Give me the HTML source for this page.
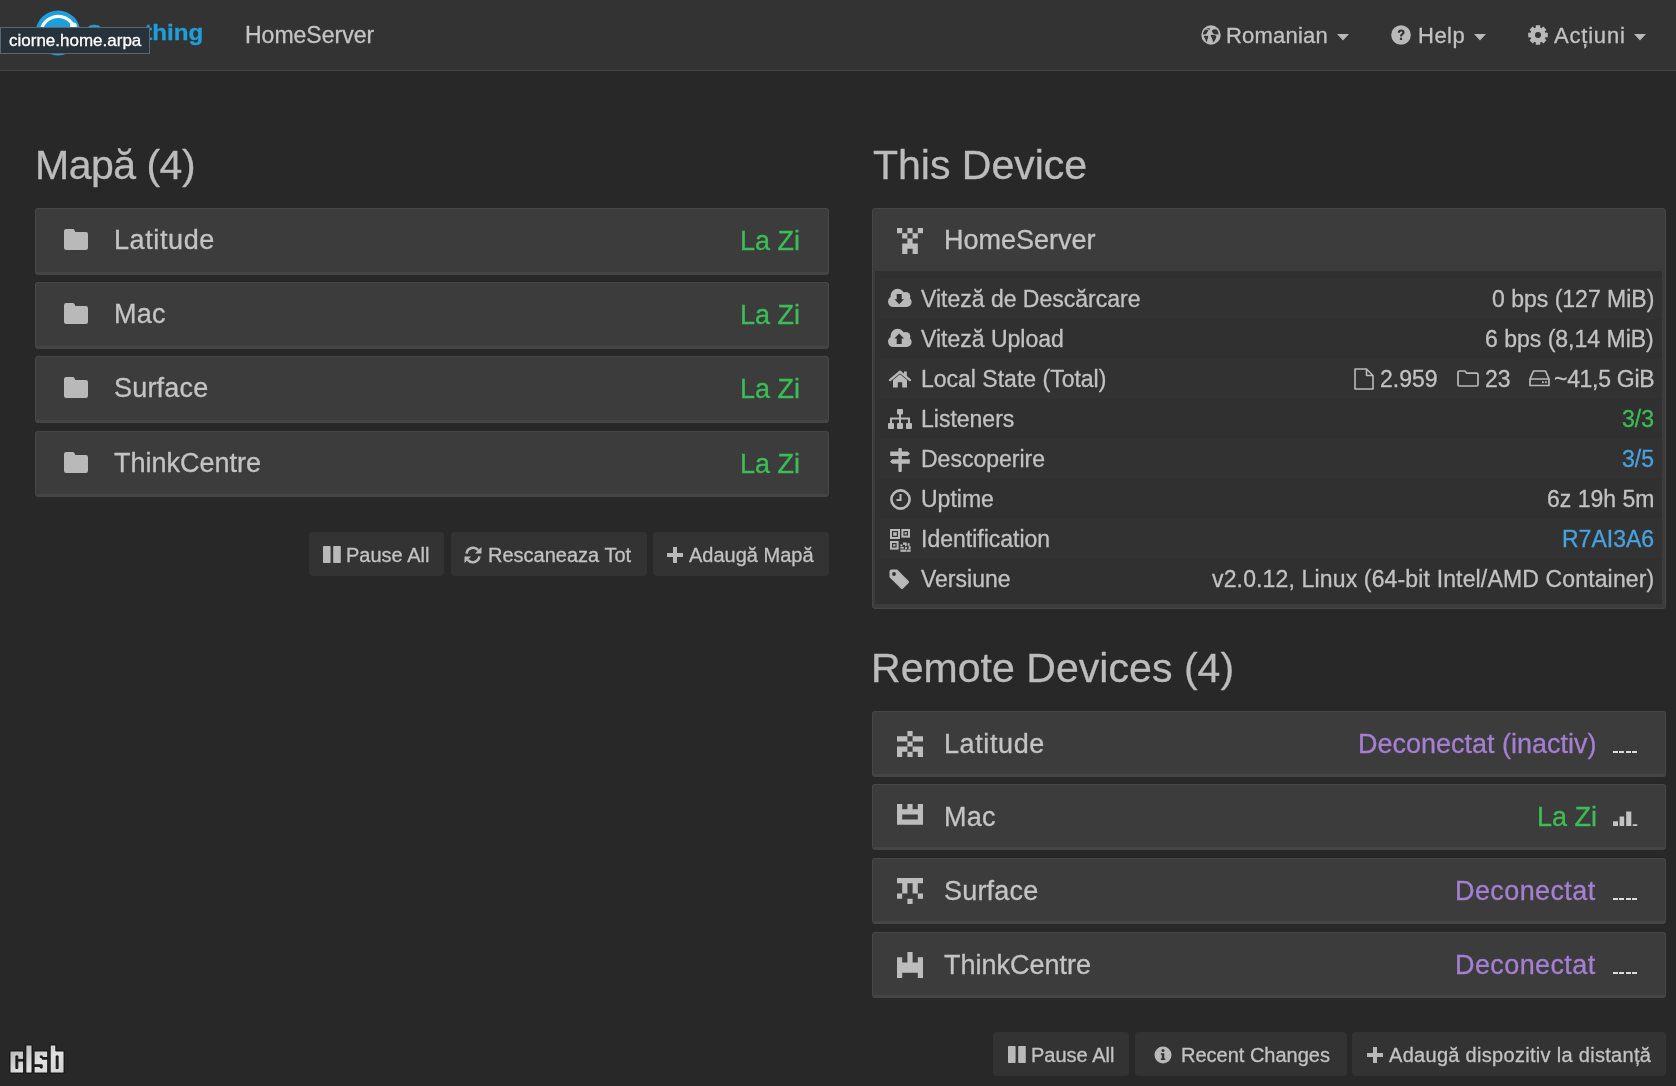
<!DOCTYPE html><html><head><meta charset="utf-8"><style>
html,body{margin:0;padding:0;}
body{width:1676px;height:1086px;background:#282828;position:relative;overflow:hidden;font-family:"Liberation Sans",sans-serif;color:#bdbdbd;}
.t{position:absolute;line-height:1;white-space:nowrap;will-change:transform;-webkit-text-stroke-width:0.3px;}
svg{position:absolute;display:block;overflow:visible;}
#nav{position:absolute;left:0;top:0;width:1676px;height:70px;background:#333333;border-bottom:1px solid #474747;}
.fp{position:absolute;left:35px;width:794px;background:#3c3c3c;border:1px solid #474747;border-bottom:3px solid #454545;border-radius:3px;box-sizing:border-box;}
.dp{position:absolute;left:872px;width:794px;background:#3c3c3c;border:1px solid #474747;border-bottom:3px solid #454545;border-radius:3px;box-sizing:border-box;}
.btn{position:absolute;height:44px;background:#333333;border-radius:4px;}
.h{font-size:41px;color:#bcbcbc}
.pt{font-size:27px;color:#c4c4c4}
.tr{font-size:23px;color:#c2c2c2}
.bt{font-size:20px;color:#c2c2c2}
.g{color:#3cbd57}
.p{color:#a57fd2}
.b{color:#48a2df}
.stripe{position:absolute;left:876px;width:786px;height:40px;}
</style></head><body>
<div id="nav"></div>
<svg style="left:35px;top:10px" width="46" height="46" viewBox="0 0 46 46"><circle cx="23" cy="23" r="22.5" fill="#1f9fd9"/><path d="M5.8 24.5A17.3 17.3 0 0 1 37.8 14.6" fill="none" stroke="#fff" stroke-width="3.2"/><circle cx="38.4" cy="16" r="3.4" fill="#fff"/></svg>
<div class="t" style="left:97px;top:22.1px;font-size:22px;font-weight:bold;letter-spacing:0px;color:#1f9fd9;transform:scaleX(1.1);transform-origin:100% 50%">Syncthing</div>
<div class="t" style="left:245px;top:23.7px;font-size:23px;color:#c4c4c4">HomeServer</div>
<div style="position:absolute;left:0;top:27px;width:148px;height:25px;background:#27323b;border:1px solid #5a6670;"></div>
<div class="t" style="left:8.5px;top:32.2px;font-size:17px;color:#ffffff;-webkit-text-stroke:0.3px #fff">ciorne.home.arpa</div>
<svg style="left:1200.5px;top:24.7px" width="20" height="20" viewBox="0 0 20 20"><circle cx="10" cy="10" r="9.7" fill="#b9b9b9"/><path d="M2 9.2Q1.8 7 3.4 5.4Q5 4.2 6.4 4.8L7.4 5.6Q6.2 7 5.6 8.6Q4.2 9.9 2 9.2Z" fill="#333333"/><path d="M5.4 3.6Q7.4 2.8 9.4 3.4L8.6 4.8Q6.8 4.6 5.4 3.6Z" fill="#333333"/><path d="M10.8 5.6Q13 3.8 15.6 4.6Q17.6 6.2 17.4 9.8Q16 8.8 14.8 9.6Q12.8 9.4 12 8.2Q11 7.2 10.8 5.6Z" fill="#333333"/><path d="M2.8 11Q5 10.3 7.1 11Q7.5 12.9 6.5 14.3Q6 16.4 5.3 17.2Q4.6 15.5 4.2 13.8Q3 12.6 2.8 11Z" fill="#333333"/><path d="M9.8 10Q12.4 9.5 15.3 10.8Q15.5 13.1 14.1 15Q13.1 16.7 12 17.2Q11.6 15.1 11.2 13.5Q9.8 12.2 9.8 10Z" fill="#333333"/></svg>
<div class="t" style="left:1226px;top:25.2px;font-size:22px;letter-spacing:0.2px;color:#c2c2c2">Romanian</div>
<svg style="left:1337px;top:33.5px" width="12" height="7" viewBox="0 0 12 7"><path d="M0 0H12L6 6.5Z" fill="#b9b9b9"/></svg>
<svg style="left:1391.3px;top:24.7px" width="20" height="20" viewBox="0 0 20 20"><circle cx="10" cy="10" r="9.8" fill="#b9b9b9"/><path d="M6.6 7.4Q7 4.4 10.2 4.4Q13.6 4.6 13.6 7.4Q13.6 9 11.8 10Q11 10.5 11 11.6H9Q8.9 9.6 10.4 8.6Q11.4 8 11.4 7.4Q11.3 6.4 10.1 6.4Q8.9 6.4 8.6 8.1Z" fill="#333333"/><rect x="8.9" y="12.7" width="2.2" height="2.3" fill="#333333"/></svg>
<div class="t" style="left:1417.5px;top:25.2px;font-size:22px;letter-spacing:0.5px;color:#c2c2c2">Help</div>
<svg style="left:1474px;top:33.5px" width="12" height="7" viewBox="0 0 12 7"><path d="M0 0H12L6 6.5Z" fill="#b9b9b9"/></svg>
<svg style="left:1528px;top:24.8px" width="20" height="20" viewBox="0 0 20 20"><path d="M16.79 7.60L19.76 7.82L19.76 12.18L16.79 12.40L16.50 13.10L18.44 15.36L15.36 18.44L13.10 16.50L12.40 16.79L12.18 19.76L7.82 19.76L7.60 16.79L6.90 16.50L4.64 18.44L1.56 15.36L3.50 13.10L3.21 12.40L0.24 12.18L0.24 7.82L3.21 7.60L3.50 6.90L1.56 4.64L4.64 1.56L6.90 3.50L7.60 3.21L7.82 0.24L12.18 0.24L12.40 3.21L13.10 3.50L15.36 1.56L18.44 4.64L16.50 6.90Z" fill="#b9b9b9"/><circle cx="10" cy="10" r="7.4" fill="#b9b9b9"/><circle cx="10" cy="10" r="3" fill="#333333"/></svg>
<div class="t" style="left:1554px;top:25.2px;font-size:22px;letter-spacing:0.8px;color:#c2c2c2">Acțiuni</div>
<svg style="left:1634px;top:33.5px" width="12" height="7" viewBox="0 0 12 7"><path d="M0 0H12L6 6.5Z" fill="#b9b9b9"/></svg>
<div class="t h" style="left:34.5px;top:145px;letter-spacing:-0.5px">Mapă (4)</div>
<div class="t h" style="left:872.5px;top:145px;letter-spacing:0px">This Device</div>
<div class="t h" style="left:871px;top:648.3px;letter-spacing:0.05px">Remote Devices (4)</div>
<div class="fp" style="top:208px;height:67px"></div>
<svg style="left:64px;top:229px" width="24" height="21" viewBox="0 0 24 21"><path d="M2.2 0H8.6Q10 0 10.6 1.3L11.3 3H21.8Q24 3 24 5.2V18.8Q24 21 21.8 21H2.2Q0 21 0 18.8V2.2Q0 0 2.2 0Z" fill="#b9b9b9"/></svg>
<div class="t pt" style="left:114px;top:227px;letter-spacing:0.6px">Latitude</div>
<div class="t pt g" style="left:740px;top:227.5px">La Zi</div>
<div class="fp" style="top:282px;height:67px"></div>
<svg style="left:64px;top:303px" width="24" height="21" viewBox="0 0 24 21"><path d="M2.2 0H8.6Q10 0 10.6 1.3L11.3 3H21.8Q24 3 24 5.2V18.8Q24 21 21.8 21H2.2Q0 21 0 18.8V2.2Q0 0 2.2 0Z" fill="#b9b9b9"/></svg>
<div class="t pt" style="left:114px;top:301px;letter-spacing:0.25px">Mac</div>
<div class="t pt g" style="left:740px;top:301.5px">La Zi</div>
<div class="fp" style="top:356px;height:67px"></div>
<svg style="left:64px;top:377px" width="24" height="21" viewBox="0 0 24 21"><path d="M2.2 0H8.6Q10 0 10.6 1.3L11.3 3H21.8Q24 3 24 5.2V18.8Q24 21 21.8 21H2.2Q0 21 0 18.8V2.2Q0 0 2.2 0Z" fill="#b9b9b9"/></svg>
<div class="t pt" style="left:114px;top:375px;letter-spacing:0.2px">Surface</div>
<div class="t pt g" style="left:740px;top:375.5px">La Zi</div>
<div class="fp" style="top:431px;height:66px"></div>
<svg style="left:64px;top:452px" width="24" height="21" viewBox="0 0 24 21"><path d="M2.2 0H8.6Q10 0 10.6 1.3L11.3 3H21.8Q24 3 24 5.2V18.8Q24 21 21.8 21H2.2Q0 21 0 18.8V2.2Q0 0 2.2 0Z" fill="#b9b9b9"/></svg>
<div class="t pt" style="left:114px;top:450px;letter-spacing:0px">ThinkCentre</div>
<div class="t pt g" style="left:740px;top:450.5px">La Zi</div>
<div class="btn" style="left:309px;top:532px;width:135px"></div>
<div class="btn" style="left:451px;top:532px;width:196px"></div>
<div class="btn" style="left:653px;top:532px;width:176px"></div>
<svg style="left:323px;top:546px" width="18" height="17" viewBox="0 0 18 17"><rect x="0" y="0" width="7.6" height="17" rx="0.8" fill="#b9b9b9"/><rect x="10.2" y="0" width="7.6" height="17" rx="0.8" fill="#b9b9b9"/></svg>
<div class="t bt" style="left:346px;top:545px">Pause All</div>
<svg style="left:464px;top:546px" width="18" height="18" viewBox="0 0 18 18"><path d="M2.6 7.6A6.6 6.6 0 0 1 14.2 4.2" fill="none" stroke="#b9b9b9" stroke-width="2.6"/><path d="M17.5 1V7.6H10.9Z" fill="#b9b9b9"/><path d="M15.4 10.4A6.6 6.6 0 0 1 3.8 13.8" fill="none" stroke="#b9b9b9" stroke-width="2.6"/><path d="M0.5 17V10.4H7.1Z" fill="#b9b9b9"/></svg>
<div class="t bt" style="left:488px;top:545px">Rescaneaza Tot</div>
<svg style="left:667px;top:547px" width="16" height="16" viewBox="0 0 16 16"><path d="M6 0H10V6H16V10H10V16H6V10H0V6H6Z" fill="#b9b9b9"/></svg>
<div class="t bt" style="left:689px;top:545px">Adaugă Mapă</div>
<div style="position:absolute;left:872px;top:208px;width:794px;height:401px;background:#3c3c3c;border:1px solid #464646;box-sizing:border-box;border-radius:3px"></div>
<div style="position:absolute;left:875px;top:271px;width:787px;height:333px;background:#303030"></div>
<div class="stripe" style="top:279px;background:#323232"></div>
<div class="stripe" style="top:359px;background:#323232"></div>
<div class="stripe" style="top:439px;background:#323232"></div>
<div class="stripe" style="top:519px;background:#323232"></div>
<svg style="left:897px;top:228px" width="26" height="26" viewBox="0 0 26 26"><path d="M0.0 0.0h5.2v5.2h-5.2zM10.4 0.0h5.2v5.2h-5.2zM20.8 0.0h5.2v5.2h-5.2zM5.2 5.2h5.2v5.2h-5.2zM15.6 5.2h5.2v5.2h-5.2zM10.4 10.4h5.2v5.2h-5.2zM5.2 15.6h5.2v5.2h-5.2zM10.4 15.6h5.2v5.2h-5.2zM15.6 15.6h5.2v5.2h-5.2zM5.2 20.8h5.2v5.2h-5.2zM15.6 20.8h5.2v5.2h-5.2z" fill="#bdbdbd"/></svg>
<div class="t pt" style="left:944px;top:227px">HomeServer</div>
<div class="t tr" style="left:920.5px;top:287.5px">Viteză de Descărcare</div>
<div class="t tr" style="left:920.5px;top:327.5px">Viteză Upload</div>
<div class="t tr" style="left:920.5px;top:367.5px">Local State (Total)</div>
<div class="t tr" style="left:920.5px;top:407.5px">Listeners</div>
<div class="t tr" style="left:920.5px;top:447.5px">Descoperire</div>
<div class="t tr" style="left:920.5px;top:487.5px">Uptime</div>
<div class="t tr" style="left:920.5px;top:527.5px">Identification</div>
<div class="t tr" style="left:920.5px;top:567.5px">Versiune</div>
<svg style="left:884px;top:283px" width="32" height="30" viewBox="0 0 32 30"><circle cx="9.4" cy="18.6" r="5.4" fill="#b9b9b9"/><circle cx="13.6" cy="12.9" r="7.1" fill="#b9b9b9"/><circle cx="21.6" cy="13.6" r="4.7" fill="#b9b9b9"/><circle cx="22.6" cy="19" r="5" fill="#b9b9b9"/><rect x="9.4" y="13" width="13.2" height="11" fill="#b9b9b9"/><path d="M12.7 11H17.7V16.3H20L15.2 21.2L10.4 16.3H12.7Z" fill="#303030"/></svg>
<svg style="left:884px;top:323px" width="32" height="30" viewBox="0 0 32 30"><circle cx="9.4" cy="18.6" r="5.4" fill="#b9b9b9"/><circle cx="13.6" cy="12.9" r="7.1" fill="#b9b9b9"/><circle cx="21.6" cy="13.6" r="4.7" fill="#b9b9b9"/><circle cx="22.6" cy="19" r="5" fill="#b9b9b9"/><rect x="9.4" y="13" width="13.2" height="11" fill="#b9b9b9"/><path d="M15.2 10.6L20 15.6H17.7V21H12.7V15.6H10.4Z" fill="#303030"/></svg>
<svg style="left:889px;top:369.5px" width="22" height="18" viewBox="0 0 22 18"><path d="M4 17.5V10L11 4.2L18 10V17.5H13.2V12.3H8.8V17.5Z" fill="#b9b9b9"/><path d="M1 10.2L11 1.8L21 10.2" fill="none" stroke="#b9b9b9" stroke-width="2.2" stroke-linecap="round"/><rect x="15" y="1.5" width="2.8" height="5" fill="#b9b9b9"/></svg>
<svg style="left:888px;top:409px" width="24" height="20" viewBox="0 0 24 20"><rect x="9" y="0" width="6" height="5.5" rx="1" fill="#b9b9b9"/><rect x="0" y="14" width="6" height="6" rx="1" fill="#b9b9b9"/><rect x="9" y="14" width="6" height="6" rx="1" fill="#b9b9b9"/><rect x="18" y="14" width="6" height="6" rx="1" fill="#b9b9b9"/><path d="M12 5V14M3 14V9.5H21V14" fill="none" stroke="#b9b9b9" stroke-width="2"/></svg>
<svg style="left:889px;top:447.5px" width="22" height="24" viewBox="0 0 22 24"><rect x="9.4" y="0" width="3.4" height="24" rx="1" fill="#b9b9b9"/><path d="M1.2 3.4H18.6L21 5.7L18.6 8H1.2Z" fill="#b9b9b9"/><path d="M3.4 11.2H20.8V15.8H3.4L1 13.5Z" fill="#b9b9b9"/></svg>
<svg style="left:889.5px;top:488.5px" width="21" height="21" viewBox="0 0 21 21"><circle cx="10.5" cy="10.5" r="9.1" fill="none" stroke="#b9b9b9" stroke-width="2.6"/><path d="M10.5 5V11H6.5" fill="none" stroke="#b9b9b9" stroke-width="2"/></svg>
<svg style="left:890px;top:528.8px" width="21" height="21" viewBox="0 0 21 21"><rect x="1" y="1" width="8" height="8" fill="none" stroke="#b9b9b9" stroke-width="2"/><rect x="3.2" y="3.2" width="3.6" height="3.6" fill="#b9b9b9"/><rect x="12.4" y="1" width="6.6" height="6.6" fill="none" stroke="#b9b9b9" stroke-width="2"/><rect x="14.6" y="3.1999999999999997" width="2.2" height="2.2" fill="#b9b9b9"/><rect x="1" y="13" width="6.6" height="6.6" fill="none" stroke="#b9b9b9" stroke-width="2"/><rect x="3.1999999999999997" y="15.2" width="2.2" height="2.2" fill="#b9b9b9"/><rect x="12.4" y="0" width="0" height="0" fill="#b9b9b9"/><rect x="13" y="13.5" width="3.5" height="2.3" fill="#b9b9b9"/><rect x="15" y="14.6" width="1.6" height="2.6" fill="#b9b9b9"/><rect x="10.4" y="15.4" width="2" height="2" fill="#b9b9b9"/><rect x="10.4" y="18" width="3.4" height="1.6" fill="#b9b9b9"/><rect x="10.4" y="20.6" width="6" height="2.2" fill="#b9b9b9"/><rect x="15" y="18.2" width="2" height="2" fill="#b9b9b9"/><rect x="17.6" y="14.2" width="2" height="2.6" fill="#b9b9b9"/><rect x="18.6" y="17.2" width="2" height="3" fill="#b9b9b9"/><rect x="17.2" y="20.6" width="3.4" height="2.2" fill="#b9b9b9"/><rect x="16.4" y="21.6" width="1" height="1" fill="#b9b9b9"/></svg>
<svg style="left:889px;top:568.5px" width="21" height="21" viewBox="0 0 21 21"><path d="M0.5 2.5Q0.5 0.5 2.5 0.5H8.2L19.6 11.9Q20.7 13 19.6 14.1L14.1 19.6Q13 20.7 11.9 19.6L0.5 8.2Z" fill="#b9b9b9"/><circle cx="5" cy="5" r="1.9" fill="#303030"/></svg>
<div class="t tr" style="right:22px;top:287.5px;text-align:right">0 bps (127 MiB)</div>
<div class="t tr" style="right:22px;top:327.5px;text-align:right">6 bps (8,14 MiB)</div>
<div class="t tr" style="right:22px;top:407.5px;text-align:right"><span class="g">3/3</span></div>
<div class="t tr" style="right:22px;top:447.5px;text-align:right"><span class="b">3/5</span></div>
<div class="t tr" style="right:22px;top:487.5px;text-align:right">6z 19h 5m</div>
<div class="t tr" style="right:22px;top:527.5px;text-align:right"><span class="b">R7AI3A6</span></div>
<div class="t tr" style="right:22px;top:567.5px;text-align:right"><span style="letter-spacing:0.15px">v2.0.12, Linux (64-bit Intel/AMD Container</span>)</div>
<svg style="left:1353.5px;top:368px" width="20" height="22" viewBox="0 0 20 22"><path d="M1 1H12.5L19 7.5V21H1Z M12.5 1V7.5H19" fill="none" stroke="#b9b9b9" stroke-width="1.6" stroke-linejoin="round"/></svg>
<div class="t tr" style="left:1380px;top:367.5px">2.959</div>
<svg style="left:1456.5px;top:370px" width="22" height="17" viewBox="0 0 22 17"><path d="M2.5 1H8L9.8 3.2H19.5Q21 3.2 21 4.7V14.5Q21 16 19.5 16H2.5Q1 16 1 14.5V2.5Q1 1 2.5 1Z" fill="none" stroke="#b9b9b9" stroke-width="1.7" stroke-linejoin="round"/></svg>
<div class="t tr" style="left:1485px;top:367.5px">23</div>
<svg style="left:1528.5px;top:370px" width="21" height="17" viewBox="0 0 21 17"><path d="M1 9L4.5 1H16.5L20 9V15.5H1Z M1 9H20" fill="none" stroke="#b9b9b9" stroke-width="1.7" stroke-linejoin="round"/><rect x="13" y="11.3" width="1.8" height="1.8" fill="#b9b9b9"/><rect x="16" y="11.3" width="1.8" height="1.8" fill="#b9b9b9"/></svg>
<div class="t tr" style="right:22px;top:367.5px;letter-spacing:-0.3px">~41,5 GiB</div>
<div class="dp" style="top:711px;height:66px"></div>
<svg style="left:897px;top:731px" width="26" height="26" viewBox="0 0 26 26"><path d="M10.4 0.0h5.2v5.2h-5.2zM0.0 5.2h5.2v5.2h-5.2zM5.2 5.2h5.2v5.2h-5.2zM15.6 5.2h5.2v5.2h-5.2zM20.8 5.2h5.2v5.2h-5.2zM10.4 10.4h5.2v5.2h-5.2zM0.0 15.6h5.2v5.2h-5.2zM5.2 15.6h5.2v5.2h-5.2zM15.6 15.6h5.2v5.2h-5.2zM20.8 15.6h5.2v5.2h-5.2zM0.0 20.8h5.2v5.2h-5.2zM10.4 20.8h5.2v5.2h-5.2zM20.8 20.8h5.2v5.2h-5.2z" fill="#bdbdbd"/></svg>
<div class="t pt" style="left:944px;top:730.5px;letter-spacing:0.6px">Latitude</div>
<div class="t pt p" style="right:79px;top:730.5px;text-align:right;letter-spacing:0px">Deconectat (inactiv)</div>
<div style="position:absolute;left:1612.8px;top:751px;width:5px;height:1.6px;background:#dcdcdc"></div><div style="position:absolute;left:1619.2px;top:751px;width:5px;height:1.6px;background:#dcdcdc"></div><div style="position:absolute;left:1625.6px;top:751px;width:5px;height:1.6px;background:#dcdcdc"></div><div style="position:absolute;left:1632.0px;top:751px;width:5px;height:1.6px;background:#dcdcdc"></div>
<div class="dp" style="top:784px;height:66px"></div>
<svg style="left:897px;top:804px" width="26" height="26" viewBox="0 0 26 26"><path d="M0.0 0.0h5.2v5.2h-5.2zM10.4 0.0h5.2v5.2h-5.2zM20.8 0.0h5.2v5.2h-5.2zM0.0 5.2h5.2v5.2h-5.2zM5.2 5.2h5.2v5.2h-5.2zM10.4 5.2h5.2v5.2h-5.2zM15.6 5.2h5.2v5.2h-5.2zM20.8 5.2h5.2v5.2h-5.2zM0.0 10.4h5.2v5.2h-5.2zM20.8 10.4h5.2v5.2h-5.2zM0.0 15.6h5.2v5.2h-5.2zM5.2 15.6h5.2v5.2h-5.2zM10.4 15.6h5.2v5.2h-5.2zM15.6 15.6h5.2v5.2h-5.2zM20.8 15.6h5.2v5.2h-5.2z" fill="#bdbdbd"/></svg>
<div class="t pt" style="left:944px;top:803.5px;letter-spacing:0.25px">Mac</div>
<div class="t pt g" style="right:79px;top:803.5px;text-align:right;letter-spacing:0px">La Zi</div>
<svg style="left:1612.5px;top:811px" width="26" height="15" viewBox="0 0 26 15"><rect x="0" y="10.3" width="5" height="4.7" fill="#c4c4c4"/><rect x="6.6" y="5.5" width="4.6" height="9.5" fill="#c4c4c4"/><rect x="13.2" y="0.5" width="5.1" height="14.5" fill="#c4c4c4"/><rect x="19.7" y="13.2" width="4.6" height="1.8" fill="#c4c4c4"/></svg>
<div class="dp" style="top:858px;height:66px"></div>
<svg style="left:897px;top:878px" width="26" height="26" viewBox="0 0 26 26"><path d="M0.0 0.0h5.2v5.2h-5.2zM5.2 0.0h5.2v5.2h-5.2zM10.4 0.0h5.2v5.2h-5.2zM15.6 0.0h5.2v5.2h-5.2zM20.8 0.0h5.2v5.2h-5.2zM5.2 5.2h5.2v5.2h-5.2zM15.6 5.2h5.2v5.2h-5.2zM5.2 10.4h5.2v5.2h-5.2zM15.6 10.4h5.2v5.2h-5.2zM0.0 15.6h5.2v5.2h-5.2zM20.8 15.6h5.2v5.2h-5.2zM10.4 20.8h5.2v5.2h-5.2z" fill="#bdbdbd"/></svg>
<div class="t pt" style="left:944px;top:877.5px;letter-spacing:0.2px">Surface</div>
<div class="t pt p" style="right:80px;top:877.5px;text-align:right;letter-spacing:0.4px">Deconectat</div>
<div style="position:absolute;left:1612.8px;top:898px;width:5px;height:1.6px;background:#dcdcdc"></div><div style="position:absolute;left:1619.2px;top:898px;width:5px;height:1.6px;background:#dcdcdc"></div><div style="position:absolute;left:1625.6px;top:898px;width:5px;height:1.6px;background:#dcdcdc"></div><div style="position:absolute;left:1632.0px;top:898px;width:5px;height:1.6px;background:#dcdcdc"></div>
<div class="dp" style="top:932px;height:66px"></div>
<svg style="left:897px;top:952px" width="26" height="26" viewBox="0 0 26 26"><path d="M10.4 0.0h5.2v5.2h-5.2zM0.0 5.2h5.2v5.2h-5.2zM10.4 5.2h5.2v5.2h-5.2zM20.8 5.2h5.2v5.2h-5.2zM0.0 10.4h5.2v5.2h-5.2zM5.2 10.4h5.2v5.2h-5.2zM10.4 10.4h5.2v5.2h-5.2zM15.6 10.4h5.2v5.2h-5.2zM20.8 10.4h5.2v5.2h-5.2zM0.0 15.6h5.2v5.2h-5.2zM5.2 15.6h5.2v5.2h-5.2zM10.4 15.6h5.2v5.2h-5.2zM15.6 15.6h5.2v5.2h-5.2zM20.8 15.6h5.2v5.2h-5.2zM0.0 20.8h5.2v5.2h-5.2zM20.8 20.8h5.2v5.2h-5.2z" fill="#bdbdbd"/></svg>
<div class="t pt" style="left:944px;top:951.5px;letter-spacing:0px">ThinkCentre</div>
<div class="t pt p" style="right:80px;top:951.5px;text-align:right;letter-spacing:0.4px">Deconectat</div>
<div style="position:absolute;left:1612.8px;top:972px;width:5px;height:1.6px;background:#dcdcdc"></div><div style="position:absolute;left:1619.2px;top:972px;width:5px;height:1.6px;background:#dcdcdc"></div><div style="position:absolute;left:1625.6px;top:972px;width:5px;height:1.6px;background:#dcdcdc"></div><div style="position:absolute;left:1632.0px;top:972px;width:5px;height:1.6px;background:#dcdcdc"></div>
<div class="btn" style="left:993px;top:1032px;width:136px"></div>
<div class="btn" style="left:1135px;top:1032px;width:212px"></div>
<div class="btn" style="left:1352px;top:1032px;width:314px"></div>
<svg style="left:1007.5px;top:1046px" width="18" height="17" viewBox="0 0 18 17"><rect x="0" y="0" width="7.6" height="17" rx="0.8" fill="#b9b9b9"/><rect x="10.2" y="0" width="7.6" height="17" rx="0.8" fill="#b9b9b9"/></svg>
<div class="t bt" style="left:1031px;top:1045px">Pause All</div>
<svg style="left:1153.5px;top:1045.5px" width="18" height="18" viewBox="0 0 18 18"><circle cx="9" cy="9" r="8.5" fill="#b9b9b9"/><circle cx="9" cy="4.6" r="1.5" fill="#333333"/><path d="M6.8 7.2H10.3V12.4H11.3V14H6.8V12.4H7.8V8.8H6.8Z" fill="#333333"/></svg>
<div class="t bt" style="left:1181px;top:1045px">Recent Changes</div>
<svg style="left:1367px;top:1047px" width="16" height="16" viewBox="0 0 16 16"><path d="M6 0H10V6H16V10H10V16H6V10H0V6H6Z" fill="#b9b9b9"/></svg>
<div class="t bt" style="left:1389px;top:1045px;letter-spacing:0.3px">Adaugă dispozitiv la distanță</div>
<svg style="left:9px;top:1044px" width="56" height="30" viewBox="-1 -1 56 30"><defs><linearGradient id="lg" x1="0" y1="0" x2="1" y2="1"><stop offset="0" stop-color="#b0b0b0"/><stop offset="0.6" stop-color="#e2e2e2"/><stop offset="1" stop-color="#d0d0d0"/></linearGradient></defs><path d="M0 6H13.6V28H0Z M5.9 10.9V23.5H7.8V16.1H13.6V14.4H7.8V10.9ZM15.9 0H22V28H15.9ZM24.1 6H37.7V12.5H30.3V10.9H32.2V14.2H37.7V28H24.1V21.4H30.3V23H32.2V19.8H24.1ZM40.2 0H45.8V6H54V28H40.2Z M46.2 10.9V23.5H48.1V10.9Z" fill="url(#lg)" fill-rule="evenodd" stroke="#0a0a0a" stroke-width="0.9"/></svg>
</body></html>
